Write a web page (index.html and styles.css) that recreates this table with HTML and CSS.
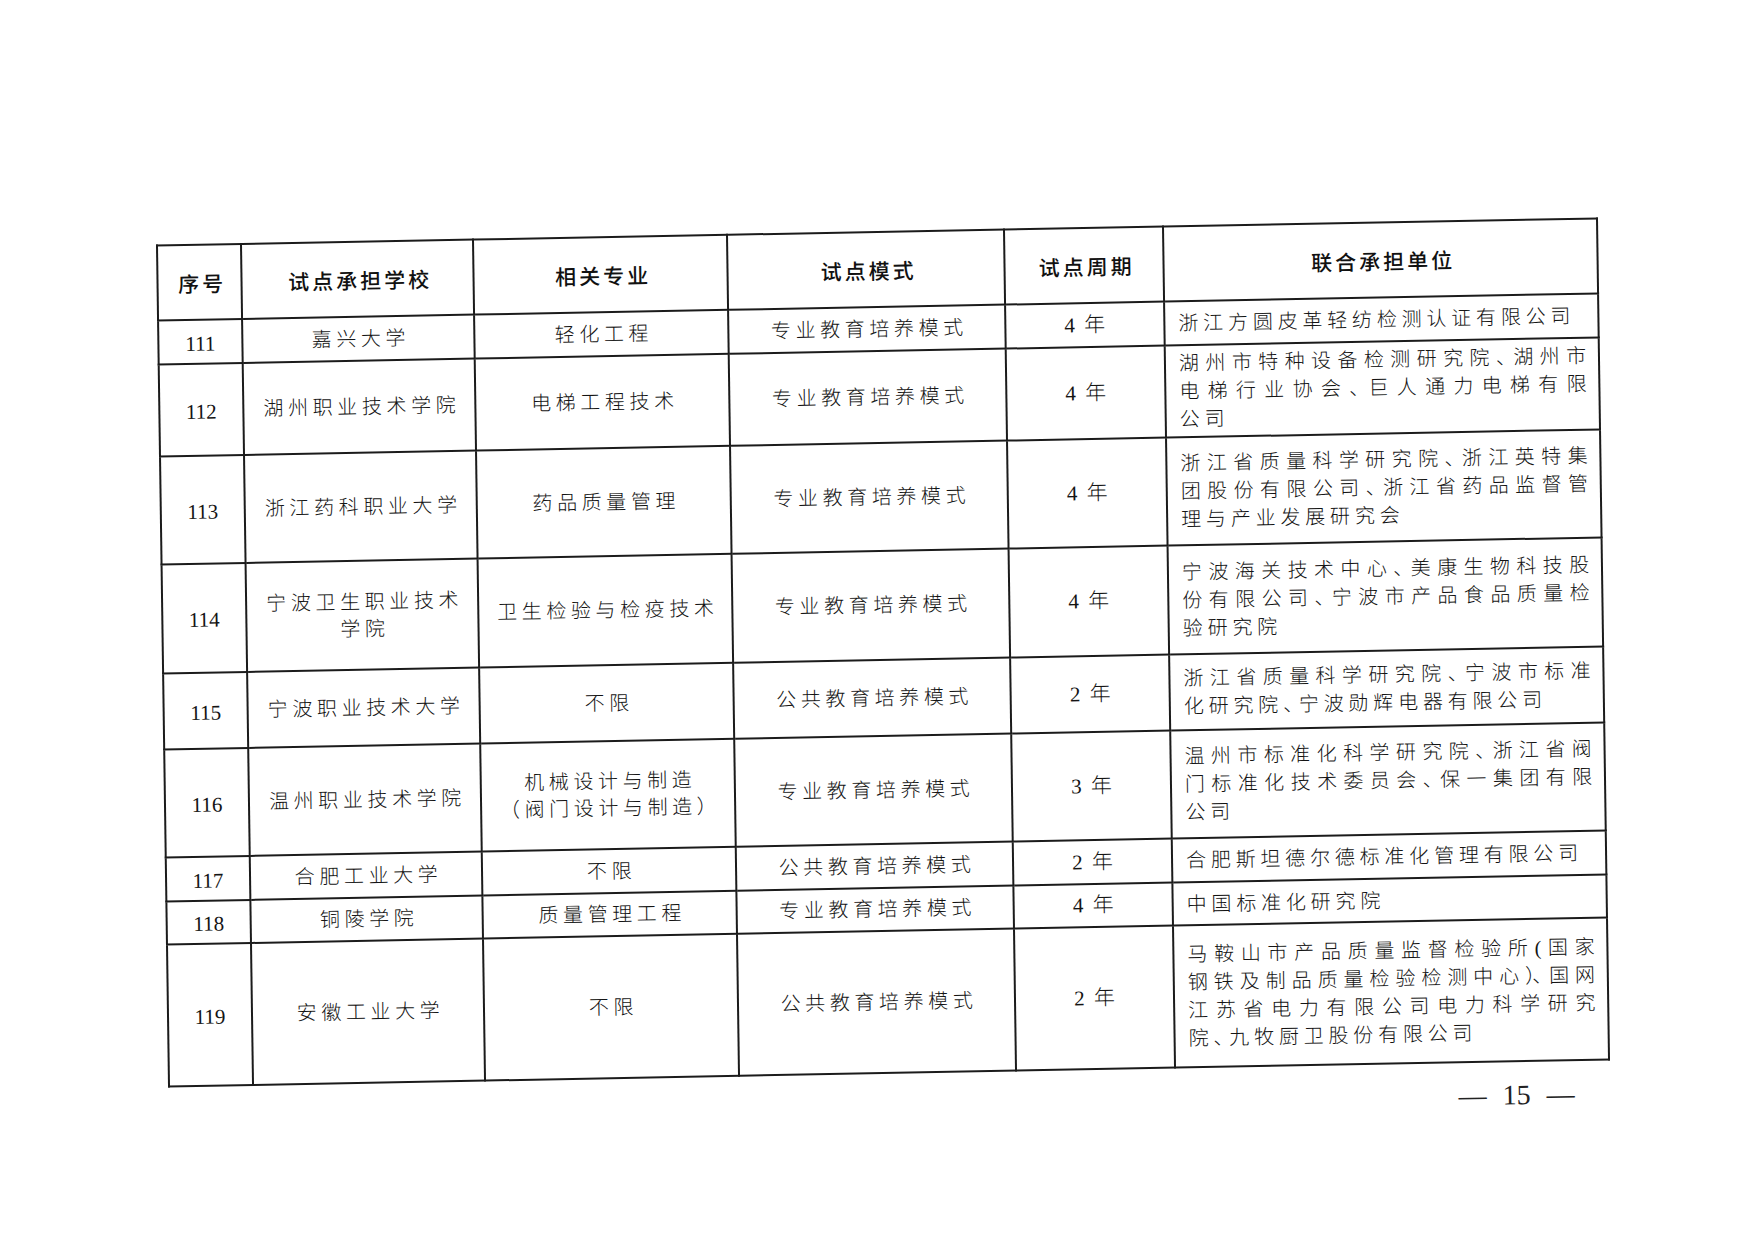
FILE: index.html
```html
<!DOCTYPE html>
<html lang="zh-CN">
<head>
<meta charset="utf-8">
<title>试点名单 15</title>
<link rel="stylesheet" href="styles.css">
</head>
<body>
<div class="page">
  <div class="sheet">
    <table class="grid">
      <colgroup>
        <col class="c1"><col class="c2"><col class="c3"><col class="c4"><col class="c5"><col class="c6">
      </colgroup>
      <thead>
        <tr class="h75">
          <th>序号</th><th>试点承担学校</th><th>相关专业</th><th>试点模式</th><th>试点周期</th><th>联合承担单位</th>
        </tr>
      </thead>
      <tbody>
        <tr class="h44">
          <td class="no">111</td><td>嘉兴大学</td><td>轻化工程</td><td>专业教育培养模式</td><td class="yr">4 年</td>
          <td class="unit"><span class="ln">浙江方圆皮革轻纺检测认证有限公司</span></td>
        </tr>
        <tr class="h92">
          <td class="no">112</td><td>湖州职业技术学院</td><td>电梯工程技术</td><td>专业教育培养模式</td><td class="yr">4 年</td>
          <td class="unit"><span class="ln j">湖州市特种设备检测研究院<span class="dun">、</span>湖州市</span><span class="ln j">电梯行业协会<span class="dun">、</span>巨人通力电梯有限</span><span class="ln">公司</span></td>
        </tr>
        <tr class="h108">
          <td class="no">113</td><td>浙江药科职业大学</td><td>药品质量管理</td><td>专业教育培养模式</td><td class="yr">4 年</td>
          <td class="unit"><span class="ln j">浙江省质量科学研究院<span class="dun">、</span>浙江英特集</span><span class="ln j">团股份有限公司<span class="dun">、</span>浙江省药品监督管</span><span class="ln">理与产业发展研究会</span></td>
        </tr>
        <tr class="h109">
          <td class="no">114</td><td><span class="ln">宁波卫生职业技术</span><span class="ln">学院</span></td><td>卫生检验与检疫技术</td><td>专业教育培养模式</td><td class="yr">4 年</td>
          <td class="unit"><span class="ln j">宁波海关技术中心<span class="dun">、</span>美康生物科技股</span><span class="ln j">份有限公司<span class="dun">、</span>宁波市产品食品质量检</span><span class="ln">验研究院</span></td>
        </tr>
        <tr class="h76">
          <td class="no">115</td><td>宁波职业技术大学</td><td>不限</td><td>公共教育培养模式</td><td class="yr">2 年</td>
          <td class="unit"><span class="ln j">浙江省质量科学研究院<span class="dun">、</span>宁波市标准</span><span class="ln">化研究院<span class="dun">、</span>宁波勋辉电器有限公司</span></td>
        </tr>
        <tr class="h108">
          <td class="no">116</td><td>温州职业技术学院</td><td><span class="ln">机械设计与制造</span><span class="ln">（阀门设计与制造）</span></td><td>专业教育培养模式</td><td class="yr">3 年</td>
          <td class="unit"><span class="ln j">温州市标准化科学研究院<span class="dun">、</span>浙江省阀</span><span class="ln j">门标准化技术委员会<span class="dun">、</span>保一集团有限</span><span class="ln">公司</span></td>
        </tr>
        <tr class="h44">
          <td class="no">117</td><td>合肥工业大学</td><td>不限</td><td>公共教育培养模式</td><td class="yr">2 年</td>
          <td class="unit"><span class="ln">合肥斯坦德尔德标准化管理有限公司</span></td>
        </tr>
        <tr class="h43">
          <td class="no">118</td><td>铜陵学院</td><td>质量管理工程</td><td>专业教育培养模式</td><td class="yr">4 年</td>
          <td class="unit"><span class="ln">中国标准化研究院</span></td>
        </tr>
        <tr class="h142">
          <td class="no">119</td><td>安徽工业大学</td><td>不限</td><td>公共教育培养模式</td><td class="yr">2 年</td>
          <td class="unit"><span class="ln j">马鞍山市产品质量监督检验所(国家</span><span class="ln j">钢铁及制品质量检验检测中心<span class="dun">）</span><span class="dun">、</span>国网</span><span class="ln j">江苏省电力有限公司电力科学研究</span><span class="ln">院<span class="dun">、</span>九牧厨卫股份有限公司</span></td>
        </tr>
      </tbody>
    </table>
    <div class="folio"><span class="dash">—</span><span class="num">15</span><span class="dash">—</span></div>
  </div>
</div>
</body>
</html>
```

FILE: styles.css
```css
html, body {
  margin: 0;
  padding: 0;
  background: #ffffff;
}

body {
  width: 1754px;
  height: 1240px;
  overflow: hidden;
  font-family: "Liberation Serif", "Noto Sans CJK SC", serif;
  color: #1c1c1c;
}

.page {
  padding: 231px 0 0 162px;
}

.sheet {
  width: 1440px;
  transform-origin: 720px 421px;
  transform: matrix(1, -0.0188, 0.0143, 1, 0, 0);
}

.grid {
  width: 1440px;
  border-collapse: collapse;
  table-layout: fixed;
}

.c1 { width: 84px; }
.c2 { width: 232px; }
.c3 { width: 254px; }
.c4 { width: 277px; }
.c5 { width: 159px; }
.c6 { width: 434px; }

.h43 { height: 43px; }
.h44 { height: 44px; }
.h75 { height: 75px; }
.h76 { height: 76px; }
.h92 { height: 92px; }
.h108 { height: 108px; }
.h109 { height: 109px; }
.h142 { height: 142px; }

.grid th,
.grid td {
  border: 2px solid #1b1b1b;
  padding: 0 2px 0 7px;
  text-align: center;
  vertical-align: middle;
}

.grid th {
  font-family: "Noto Sans CJK SC", sans-serif;
  font-size: 21px;
  font-weight: 500;
  letter-spacing: 3px;
  color: #111111;
  line-height: 28px;
}

.grid td {
  font-family: "Liberation Serif", "Noto Sans CJK SC", serif;
  font-size: 20px;
  font-weight: 300;
  letter-spacing: 4.6px;
  line-height: 27px;
  color: #141414;
}

.grid td.no {
  font-size: 21px;
  font-weight: 400;
  letter-spacing: 0;
  padding: 4px 0 0 0;
}

.grid td.yr {
  font-size: 21px;
  font-weight: 300;
  letter-spacing: 2px;
  padding: 0 0 0 2px;
}

.grid td.unit {
  text-align: left;
  padding: 0 7px 0 13px;
  line-height: 28px;
  letter-spacing: 4.8px;
}

.ln {
  display: block;
}

.ln.j {
  text-align: justify;
  text-align-last: justify;
}

.grid td.unit .dun {
  letter-spacing: -4.2px;
}

.folio {
  display: flex;
  justify-content: flex-end;
  align-items: center;
  gap: 16px;
  margin-top: 18px;
  padding-right: 34px;
  font-family: "Liberation Serif", serif;
  font-size: 28px;
  line-height: 30px;
  color: #222;
}

.dash {
  font-size: 28px;
}
```
